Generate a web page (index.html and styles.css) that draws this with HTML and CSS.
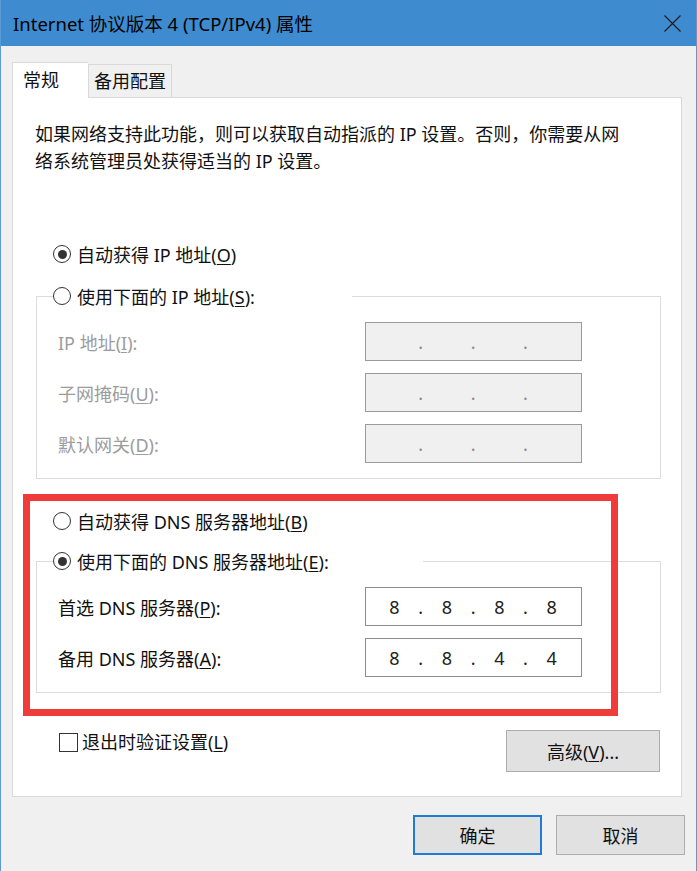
FILE: index.html
```html
<!DOCTYPE html>
<html lang="zh-CN">
<head>
<meta charset="UTF-8">
<meta name="viewport" content="width=device-width,initial-scale=1.0">
<title>Internet 协议版本 4 (TCP/IPv4) 属性</title>
<link rel="stylesheet" href="styles.css">
</head>
<body>

<div class="window">

  <!-- ===== Title bar ===== -->
  <div class="titlebar">
    <span class="title">Internet 协议版本 4 (TCP/IPv4) 属性</span>
    <button class="close" aria-label="关闭">
      <svg width="17" height="17" viewBox="0 0 17 17"><path d="M0.5 0.5L16.5 16.5M16.5 0.5L0.5 16.5" stroke="#1a1a1a" stroke-width="1.1" fill="none"/></svg>
    </button>
  </div>

  <div class="client">
    <!-- ===== Tabs ===== -->
    <div class="tabs">
      <div class="tab active">常规</div>
      <div class="tab">备用配置</div>
    </div>

    <div class="panel">
      <p class="desc">如果网络支持此功能，则可以获取自动指派的 IP 设置。否则，你需要从网<br>络系统管理员处获得适当的 IP 设置。</p>

      <!-- IP -->
      <label class="option"><span class="radio checked"></span><span>自动获得 IP 地址(<u>O</u>)</span></label>
      <fieldset class="group ip">
        <legend><span class="option"><span class="radio"></span><span>使用下面的 IP 地址(<u>S</u>):</span></span></legend>
        <div class="field disabled">
          <span>IP 地址(<u>I</u>):</span>
          <div class="ipbox"><span class="oct"></span><span class="dot">.</span><span class="oct"></span><span class="dot">.</span><span class="oct"></span><span class="dot">.</span><span class="oct"></span></div>
        </div>
        <div class="field disabled">
          <span>子网掩码(<u>U</u>):</span>
          <div class="ipbox"><span class="oct"></span><span class="dot">.</span><span class="oct"></span><span class="dot">.</span><span class="oct"></span><span class="dot">.</span><span class="oct"></span></div>
        </div>
        <div class="field disabled">
          <span>默认网关(<u>D</u>):</span>
          <div class="ipbox"><span class="oct"></span><span class="dot">.</span><span class="oct"></span><span class="dot">.</span><span class="oct"></span><span class="dot">.</span><span class="oct"></span></div>
        </div>
      </fieldset>

      <!-- DNS -->
      <label class="option dns-auto"><span class="radio"></span><span>自动获得 DNS 服务器地址(<u>B</u>)</span></label>
      <fieldset class="group dns">
        <legend><span class="option"><span class="radio checked"></span><span>使用下面的 DNS 服务器地址(<u>E</u>):</span></span></legend>
        <div class="field">
          <span>首选 DNS 服务器(<u>P</u>):</span>
          <div class="ipbox"><span class="oct">8</span><span class="dot">.</span><span class="oct">8</span><span class="dot">.</span><span class="oct">8</span><span class="dot">.</span><span class="oct">8</span></div>
        </div>
        <div class="field">
          <span>备用 DNS 服务器(<u>A</u>):</span>
          <div class="ipbox"><span class="oct">8</span><span class="dot">.</span><span class="oct">8</span><span class="dot">.</span><span class="oct">4</span><span class="dot">.</span><span class="oct">4</span></div>
        </div>
      </fieldset>

      <div class="panel-foot">
        <label class="check"><span class="box"></span><span>退出时验证设置(<u>L</u>)</span></label>
        <button class="btn advanced">高级(<u>V</u>)...</button>
      </div>

      <!-- annotation -->
      <div class="highlight"></div>
    </div>

    <div class="actions">
      <button class="btn primary">确定</button>
      <button class="btn">取消</button>
    </div>
  </div>
</div>

</body>
</html>
```

FILE: styles.css
```css
:root{
  --titleBlue:#3e8bcf;
  --edge:#d9d9d9;
  --text:#111;
  --muted:#9c9c9c;
  font-family:"Noto Sans","Noto Sans CJK SC",sans-serif;
}
*{box-sizing:border-box}
html,body{margin:0;padding:0;background:#f0f0f0}
u{text-decoration-thickness:1px;text-underline-offset:2px}

.window{
  width:697px;height:871px;background:#f0f0f0;
  border-left:1px solid #5c9ad4;border-right:1px solid #5c9ad4;
  color:var(--text);font-size:18px
}

/* ===== Title bar ===== */
.titlebar{
  height:46px;background:var(--titleBlue);
  display:flex;align-items:center;padding:0 15px 0 12px
}
.title{flex:1;font-size:18.5px;color:#000;white-space:nowrap}
.close{background:none;border:none;padding:0;width:17px;height:17px;display:flex}

/* ===== Client area ===== */
.client{padding:16px 11px 0 11px}
.tabs{display:flex;align-items:flex-end;height:35px}
.tab{
  background:#f0f0f0;border:1px solid var(--edge);border-bottom:none;
  height:33px;width:84px;display:flex;align-items:center;justify-content:center;
  font-size:18px;padding-bottom:2px
}
.tab.active{
  background:#fff;width:76px;height:36px;margin-bottom:-1px;
  position:relative;z-index:1;border-right:none;padding:0 0 4px 10px;
  justify-content:flex-start
}
.panel{
  position:relative;width:670px;height:700px;background:#fff;
  border:1px solid var(--edge);padding:23px 20px 0 23px
}
.desc{margin:0;line-height:27px;white-space:nowrap;margin-left:-1px}

/* radio rows */
.option{display:flex;align-items:center;gap:6px;height:30px;white-space:nowrap}
.panel > .option{margin:64px 0 0 17px}
.panel > .option.dns-auto{margin-top:27px}
.radio{
  width:18px;height:18px;border-radius:50%;border:1.5px solid #333;
  display:flex;align-items:center;justify-content:center;flex:none;background:#fff
}
.radio.checked::after{content:"";width:9px;height:9px;border-radius:50%;background:#333}

/* group boxes */
.group{
  margin:12px 0 0;border:1px solid #dcdcdc;padding:11px 0 15px 21px;min-width:0
}
.group.dns{margin-top:10px}
.group legend{padding:0;margin-left:-5px;height:30px}
.group.ip legend{width:299px}
.group.dns legend{width:370px}
.field{display:grid;grid-template-columns:307px 217px;align-items:center;height:39px}
.field + .field{margin-top:12px}
.field.disabled > span{color:var(--muted)}

.ipbox{
  height:39px;border:1.5px solid #8c8c8c;background:#fff;
  display:flex;align-items:center;padding-left:8.5px;
  font-size:18px;color:#222
}
.field.disabled .ipbox{background:#f0f0f0;border-color:#9a9a9a;color:#8a8a8a}
.ipbox .oct{width:40px;text-align:center}
.ipbox .dot{width:12.4px;text-align:center}

/* footer inside panel */
.panel-foot{display:flex;align-items:flex-start;justify-content:space-between;margin-top:37px}
.check{display:flex;align-items:center;gap:4px;line-height:27px;margin:-1px 0 0 23px;white-space:nowrap}
.box{width:19px;height:19px;border:1.5px solid #333;background:#fff}

.btn{
  font-family:inherit;font-size:18px;color:#111;background:#e1e1e1;
  border:1.5px solid #adadad;height:42px;padding:0;cursor:pointer
}
.advanced{width:154px;margin-right:1px}

/* annotation box */
.highlight{
  position:absolute;left:10px;top:396px;width:595px;height:222px;
  border:7px solid #f03b3b;pointer-events:none
}

/* ===== Dialog buttons ===== */
.actions{display:flex;justify-content:flex-end;gap:14px;margin-top:18px}
.actions .btn{width:129px;height:40px}
.actions .primary{border:2px solid #1f7bd6}
```
